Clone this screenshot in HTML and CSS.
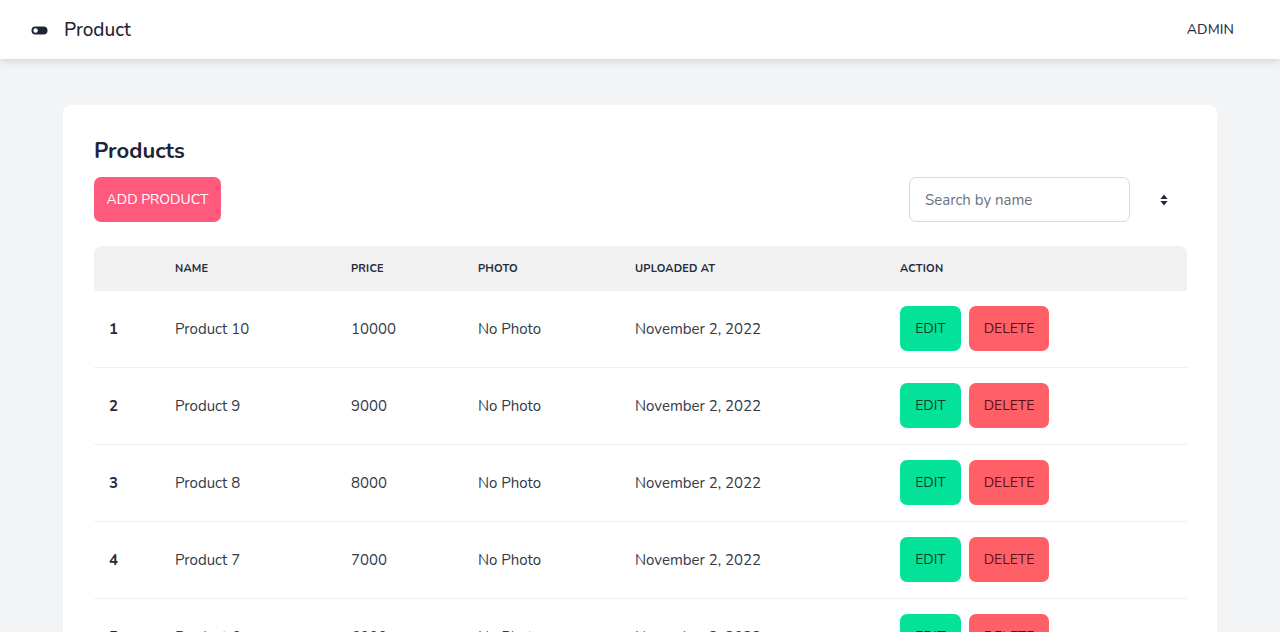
FILE: index.html
```html
<!DOCTYPE html>
<html lang="en">
<head>
<meta charset="utf-8">
<title>Product</title>
<link rel="stylesheet" href="styles.css">
</head>
<body>
<header class="topbar">
  <div class="brand">
    <svg class="brand-icon" width="17" height="9" viewBox="0 0 17 9"><rect x="0.5" y="0.5" width="16" height="8" rx="4" fill="#1f2536"/><circle cx="4.6" cy="4.5" r="2.2" fill="#fff"/></svg>
    <span class="brand-name">Product</span>
  </div>
  <div class="user">ADMIN</div>
</header>
<main class="page">
  <section class="card">
    <h1 class="title">Products</h1>
    <div class="toolbar">
      <button class="btn btn-add">ADD PRODUCT</button>
      <div class="search-group">
        <input class="search" type="text" placeholder="Search by name">
        <svg class="sort-icon" width="8" height="12" viewBox="0 0 8 12"><path d="M4 0.5 L7.5 5 H0.5 Z" fill="#1f2536"/><path d="M4 11.5 L7.5 7 H0.5 Z" fill="#1f2536"/></svg>
      </div>
    </div>
    <table class="grid">
      <colgroup>
        <col class="c-num"><col class="c-name"><col class="c-price"><col class="c-photo"><col class="c-date"><col class="c-action">
      </colgroup>
      <thead>
        <tr><th></th><th>Name</th><th>Price</th><th>Photo</th><th>Uploaded at</th><th>Action</th></tr>
      </thead>
      <tbody>
        <tr><td class="num">1</td><td>Product 10</td><td>10000</td><td>No Photo</td><td>November 2, 2022</td><td><div class="actions"><button class="btn btn-edit">EDIT</button><button class="btn btn-delete">DELETE</button></div></td></tr>
        <tr><td class="num">2</td><td>Product 9</td><td>9000</td><td>No Photo</td><td>November 2, 2022</td><td><div class="actions"><button class="btn btn-edit">EDIT</button><button class="btn btn-delete">DELETE</button></div></td></tr>
        <tr><td class="num">3</td><td>Product 8</td><td>8000</td><td>No Photo</td><td>November 2, 2022</td><td><div class="actions"><button class="btn btn-edit">EDIT</button><button class="btn btn-delete">DELETE</button></div></td></tr>
        <tr><td class="num">4</td><td>Product 7</td><td>7000</td><td>No Photo</td><td>November 2, 2022</td><td><div class="actions"><button class="btn btn-edit">EDIT</button><button class="btn btn-delete">DELETE</button></div></td></tr>
        <tr><td class="num">5</td><td>Product 6</td><td>6000</td><td>No Photo</td><td>November 2, 2022</td><td><div class="actions"><button class="btn btn-edit">EDIT</button><button class="btn btn-delete">DELETE</button></div></td></tr>
        <tr><td class="num">6</td><td>Product 5</td><td>5000</td><td>No Photo</td><td>November 2, 2022</td><td><div class="actions"><button class="btn btn-edit">EDIT</button><button class="btn btn-delete">DELETE</button></div></td></tr>
      </tbody>
    </table>
  </section>
</main>
</body>
</html>
```
FILE: styles.css
```css
* { box-sizing: border-box; }
html, body { margin: 0; padding: 0; }
body {
  font-family: "Nunito", "Lato", "Open Sans", sans-serif;
  background: #f3f4f6;
  color: #333a47;
  overflow: hidden;
}
.topbar {
  height: 59px;
  background: #fff;
  display: flex;
  align-items: center;
  justify-content: space-between;
  padding: 0 46px 0 31px;
  box-shadow: 0 2px 8px rgba(0,0,0,0.14);
  position: relative;
}
.brand { display: flex; align-items: center; gap: 16px; }
.brand-icon { display: block; margin-top: 1px; }
.brand-name { font-size: 19px; font-weight: 500; color: #1f2536; }
.user { font-size: 14px; font-weight: 500; color: #2a3040; letter-spacing: 0.1px; }
.page { padding: 46px 63px 0; }
.card {
  background: #fff;
  border-radius: 8px;
  padding: 31px 30px 0 31px;
  min-height: 600px;
}
.title {
  margin: 0 0 11px;
  font-size: 22px;
  font-weight: 700;
  color: #1f2536;
  line-height: 30px;
}
.toolbar {
  display: flex;
  justify-content: space-between;
  align-items: center;
  margin-bottom: 24px;
}
.btn {
  font-family: inherit;
  border: 0;
  border-radius: 7px;
  height: 45px;
  font-size: 14px;
  padding: 0 15px;
  cursor: pointer;
}
.btn-add { background: #ff5a7e; color: #fff; width: 127px; padding: 0; }
.search-group { display: flex; align-items: center; gap: 30px; padding-right: 19px; }
.search {
  width: 221px;
  height: 45px;
  border: 1px solid #d9d9dc;
  border-radius: 7px;
  padding: 0 15px;
  font-family: inherit;
  font-size: 15px;
  color: #333a47;
}
.search::placeholder { color: #6b7280; }
.sort-icon { display: block; }
.grid {
  width: 100%;
  border-collapse: collapse;
  table-layout: fixed;
}
.c-num { width: 66px; }
.c-name { width: 176px; }
.c-price { width: 127px; }
.c-photo { width: 157px; }
.c-date { width: 265px; }
.c-action { width: 302px; }
thead th {
  background: #f1f1f1;
  height: 45px;
  text-align: left;
  padding: 0 15px;
  font-size: 11px;
  font-weight: 700;
  text-transform: uppercase;
  color: #252b3a;
  letter-spacing: 0.2px;
}
thead th:first-child { border-top-left-radius: 8px; }
thead th:last-child { border-top-right-radius: 8px; }
tbody td {
  padding: 15px 15px 16px;
  font-size: 15px;
  color: #333a47;
  border-bottom: 1px solid #f0f0f2;
  white-space: nowrap;
}
tbody td.num { font-weight: 700; color: #252b3a; }
.actions { display: flex; gap: 8px; }
.btn-edit { background: #04e299; color: #0e3d2b; width: 61px; padding: 0; }
.btn-delete { background: #ff5f67; color: #5e1015; width: 80px; padding: 0; }
```
